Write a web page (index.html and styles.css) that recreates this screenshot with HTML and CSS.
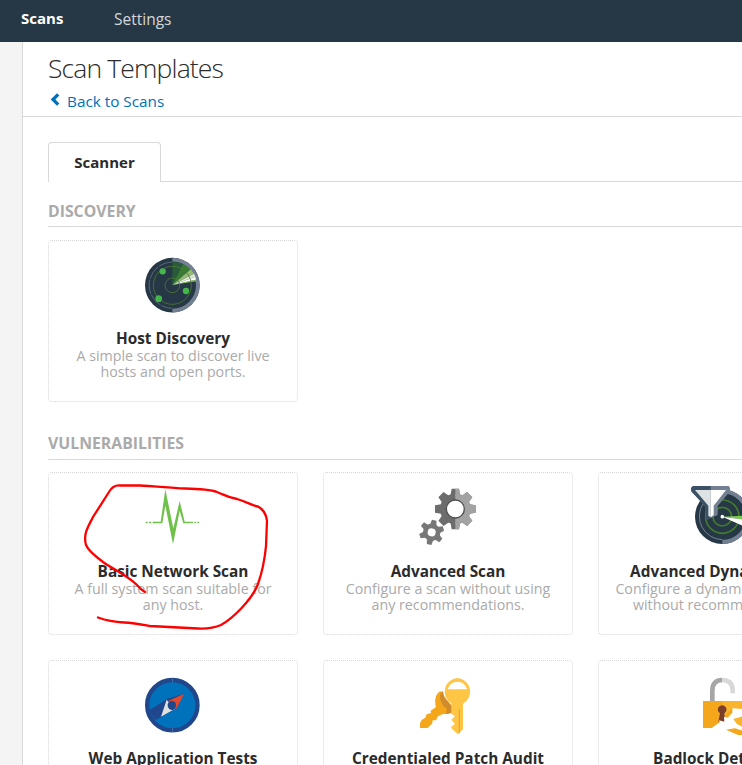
FILE: index.html
```html
<!DOCTYPE html>
<html lang="en">
<head>
<meta charset="utf-8">
<title>Scan Templates</title>
<link rel="stylesheet" href="styles.css">
</head>
<body>
<nav class="topbar"><a class="nav-item active">Scans</a><a class="nav-item settings">Settings</a></nav>
<div class="shell">
<aside class="sidebar"></aside>
<main class="page">
<header class="page-head">
<h1>Scan Templates</h1>
<a class="back"><svg class="chevron" viewBox="0 0 10 13"><path d="M8.200 1.300 3 6.500l5.200 5.200" fill="none" stroke="#0071b9" stroke-width="3.300"/></svg><span>Back to Scans</span></a>
</header>
<div class="tabs"><div class="tab">Scanner</div><div class="tab-rest"></div></div>
<section class="group">
<h2>DISCOVERY</h2>
<div class="cards">
<article class="card">
<svg class="icon" viewBox="45 36 168 168"><circle cx="127" cy="120.500" r="82" fill="#263746"/><path d="M127 38.500a82 82 0 0 1 0 164v-11a71 71 0 0 0 0-142z" fill="#738091"/><path d="M127 51a69.500 69.500 0 0 0 0 139" fill="none" stroke="#738091" stroke-width="2" stroke-dasharray="42 4"/><path d="M127 120V50q17 0 32 7z" fill="#295b3b"/><path d="M127 120l32-63q13 6 23 16z" fill="#397b35"/><path d="M127 120l55-47 10 13z" fill="#94ba75"/><path d="M127 120l65-34 4 9z" fill="#dce8cf"/><path d="M127 120l69-25 2 9z" fill="#fff"/><path d="M127 120l70-16 1 5z" fill="#8fc65d"/><g fill="none" stroke="#4a792f" stroke-width="2.500"><circle cx="127" cy="121" r="57"/><circle cx="127" cy="121" r="22"/></g><g fill="#45b649"><circle cx="98" cy="79" r="9.500"/><circle cx="168" cy="138" r="9.500"/><circle cx="86" cy="161" r="10"/></g></svg>
<h3>Host Discovery</h3>
<p>A simple scan to discover live<br>hosts and open ports.</p>
</article>
</div>
</section>
<section class="group vulnerabilities">
<h2>VULNERABILITIES</h2>
<div class="cards">
<article class="card">
<svg class="icon" viewBox="210 57 168 168"><path d="M212 157.500h6m4 0h7m4 0h5m109 0h7m4 0h5m4 0h5" stroke="#70c04c" stroke-width="4"/><path d="M236 155h21l14-97 24 117 19-82 15 62h18v5h-22l-11-37-20 100-23-116-9 53h-26z" fill="#70c04c"/></svg>
<h3>Basic Network Scan</h3>
<p>A full system scan suitable for<br>any host.</p>
<svg class="scribble" viewBox="75 470 210 170"><path d="M145 592C141 590 139 587 136 584C126 575 113 569 103 562C95 556 88 550 86 545C83 534 88 527 93 517L109 492Q113 485 120 485.500H140C154 486 169 488 185 488.500Q209 489 217 492C225 495 226 497 237 499C247 502 253 506 258 506.500Q266 511 267 521L266 546Q264 567 258 584C252 600 232 619 221 625Q212 629 198 628.500L150 626C139 624 134 623 124 622.500C114 622 105 620 98 617.500" fill="none" stroke="#f00" stroke-width="2.300" stroke-linecap="round"/></svg>
</article>
<article class="card">
<svg class="icon" viewBox="30 27 168 168"><g transform="translate(136 87)"><g id="teeth" fill="#6c6c6c"><path id="tooth" d="M-11-61H11L15-38H-15z"/><use href="#tooth" transform="rotate(45)"/><use href="#tooth" transform="rotate(90)"/><use href="#tooth" transform="rotate(135)"/><use href="#tooth" transform="rotate(180)"/><use href="#tooth" transform="rotate(225)"/><use href="#tooth" transform="rotate(270)"/><use href="#tooth" transform="rotate(315)"/><circle r="46"/></g><clipPath id="right"><path d="M0-65H65V65H0z"/></clipPath><g clip-path="url(#right)"><g fill="#a3a3a3"><path id="tooth2" d="M-11-61H11L15-38H-15z"/><use href="#tooth2" transform="rotate(45)"/><use href="#tooth2" transform="rotate(90)"/><use href="#tooth2" transform="rotate(135)"/><use href="#tooth2" transform="rotate(180)"/><circle r="46"/></g></g><circle r="27" fill="#fff" stroke="#505050" stroke-width="4"/></g><g transform="translate(65 157) rotate(12)" fill="#777"><path id="small" d="M-7-37H7L10-20H-10z"/><use href="#small" transform="rotate(60)"/><use href="#small" transform="rotate(120)"/><use href="#small" transform="rotate(180)"/><use href="#small" transform="rotate(240)"/><use href="#small" transform="rotate(300)"/><circle r="26"/><circle r="12" fill="#fff"/></g></svg>
<h3>Advanced Scan</h3>
<p>Configure a scan without using<br>any recommendations.</p>
</article>
<article class="card">
<svg class="icon" viewBox="75 72 168 168"><circle cx="157" cy="155" r="82" fill="#263746"/><path d="M157 73a82 82 0 0 1 0 164v-12a70 70 0 0 0 0-140z" fill="#738091"/><path d="M100 115a70 70 0 0 0 57 109" fill="none" stroke="#738091" stroke-width="3"/><g fill="none" stroke="#437b2e" stroke-width="5"><circle cx="157" cy="155" r="50"/><circle cx="157" cy="155" r="28"/></g><path d="M157 155l70-3v12z" fill="#79cc4a"/><path d="M157 155l69 9-4 20z" fill="#fff"/><circle cx="157" cy="155" r="5.500" fill="#fff"/><path d="M69 63H176Q185 72 176 84L143 123V150L107 166V125L65 80Q59 70 69 63z" fill="#738091"/><path d="M69 63H122V160L107 166V125L65 80Q59 70 69 63z" fill="#3b5165"/><path d="M75 75H122V157L115 152V122z" fill="#dde2e4"/><path d="M122 75H168L131 122V150L122 157z" fill="#fff"/></svg>
<h3>Advanced Dynamic Scan</h3>
<p>Configure a dynamic plugin scan<br>without recommendations.</p>
</article>
<article class="card">
<svg class="icon" viewBox="45 36 168 168"><circle cx="127" cy="120.500" r="75.500" fill="#0072bc" stroke="#20478b" stroke-width="13"/><path d="M59 135L112 101 161 87 139 130 95 155 77 164Q63 153 59 135z" fill="#20478b"/><path d="M93 155L110 104 116 112A14 14 0 0 0 138 130z" fill="#e0e0e0"/><path d="M110 104L162 87 139 131 134 127 137 120 133 112 125 108 116 111z" fill="#e4492b"/><path d="M110 103L162 86 115 108z" fill="#20478b"/><circle cx="127" cy="120" r="11" fill="#20478b"/><path d="M127.500 40v12m0 137v12" stroke="#738ab9" stroke-width="1.500"/></svg>
<h3>Web Application Tests</h3>
</article>
<article class="card">
<svg class="icon" viewBox="30 36 168 168"><path d="M91 78Q72 89 76 119L78 126 62 137 63 144 50 148 46 158 35 165 30 175V189H53L67 175 68 166H78L84 154 99 147 113 147 133 134z" fill="#f5a71c"/><path d="M98 77Q86 88 92 107Q98 125 111 130L108 146Q126 149 135 133L104 100z" fill="#cf8b2c"/><path fill-rule="evenodd" d="M142 39a41 41 0 0 1 17 77V193L144 208 124 190V185L135 177 124 164 135 154 124 146V115A41 41 0 0 1 142 39zM113 73H171Q165 51 142 50Q119 51 113 73z" fill="#ffc545"/><path d="M148 132V204" stroke="#e8a02c" stroke-width="3"/></svg>
<h3>Credentialed Patch Audit</h3>
</article>
<article class="card">
<svg class="icon" viewBox="45 36 168 168"><path d="M97 109V76Q98 45 127 45" fill="none" stroke="#a6a6a6" stroke-width="14"/><path d="M127 45Q158 46 158 76V85" fill="none" stroke="#d8d8d8" stroke-width="14"/><path d="M69 108H187L158 128V150L139 189H69z" fill="#f5a71c"/><path d="M127 108H187L158 128 127 160z" fill="#f9b32c"/><path d="M158 128L187 108V130L157 143z" fill="#f9b32c"/><path d="M120 145L115 170H136L133 145A13 13 0 1 0 120 145z" fill="#7b3e2c"/><path d="M158 130L157 143 143 158 132 155 133 170 117 166 119 172 95 189H144L139 194 187 200V163L176 160 187 132z" fill="#fff"/><path d="M160 162L187 154V186L170 176z" fill="#f9b32c"/><path d="M138 194L174 210H195V199L165 190z" fill="#f5a71c"/></svg>
<h3>Badlock Detection</h3>
</article>
</div>
</section>
</main>
</div>
</body>
</html>
```
FILE: styles.css
```css
* { box-sizing: border-box; }
body { margin: 0; height: 765px; overflow: hidden; background: #fff; font-family: "Open Sans", "Noto Sans", sans-serif; color: #2b2b2b; }
h1, h2, h3, p { margin: 0; }
.topbar { height: 42px; background: #263746; display: flex; padding-left: 21px; }
.nav-item { color: #d3d7da; font-size: 15.5px; line-height: 39px; width: 93px; }
.nav-item.active { color: #fff; font-weight: 700; font-size: 15px; line-height: 37px; }
.shell { display: flex; height: 723px; }
.sidebar { flex: 0 0 23px; background: #f4f4f4; border-right: 1px solid #d9d9d9; }
.page { flex: 1; min-width: 0; overflow: hidden; }
.page-head { height: 75px; border-bottom: 1px solid #d9d9d9; padding: 8px 0 0 25px; }
h1 { font-weight: 300; font-size: 26.5px; letter-spacing: -0.86px; line-height: 36px; white-space: nowrap; }
.back { display: flex; align-items: center; height: 30px; color: #0071b9; font-size: 15.3px; }
.chevron { width: 10px; height: 13px; margin: -3px 7px 0 2px; }
.tabs { display: flex; margin: 25px 0 0 25px; height: 40px; }
.tab { width: 113px; border: 1px solid #d9d9d9; border-bottom: 0; border-radius: 4px 4px 0 0; text-align: center; font-size: 15px; font-weight: 700; line-height: 39px; }
.tab-rest { flex: 1; border-bottom: 1px solid #d9d9d9; }
.group { margin-left: 25px; padding-top: 19px; }
.vulnerabilities { padding-top: 31px; }
h2 { font-size: 15.8px; font-weight: 700; line-height: 20px; height: 26px; color: #aaa; border-bottom: 1px solid #d9d9d9; }
.vulnerabilities h2 { height: 27px; }
.group:not(.vulnerabilities) .card { height: 162px; }
.cards { display: grid; grid-template-columns: repeat(3, 250px); gap: 25px; padding-top: 13px; }
.vulnerabilities .cards { padding-top: 12px; }
.card { position: relative; height: 163px; border: 1px dotted #d6d6d6; border-right: 1px solid #ececec; border-radius: 4px; padding-top: 16px; text-align: center; white-space: nowrap; }
.icon { display: block; width: 56px; height: 56px; margin: 0 auto; overflow: visible; }
h3 { font-size: 15.35px; font-weight: 700; line-height: 20px; margin-top: 15px; }
.vulnerabilities .card:nth-child(-n+3) h3 { margin-top: 16px; }
p { color: #aaa; font-size: 14.25px; line-height: 16px; }
.scribble { position: absolute; left: 26px; top: -3px; width: 210px; height: 170px; }
```
